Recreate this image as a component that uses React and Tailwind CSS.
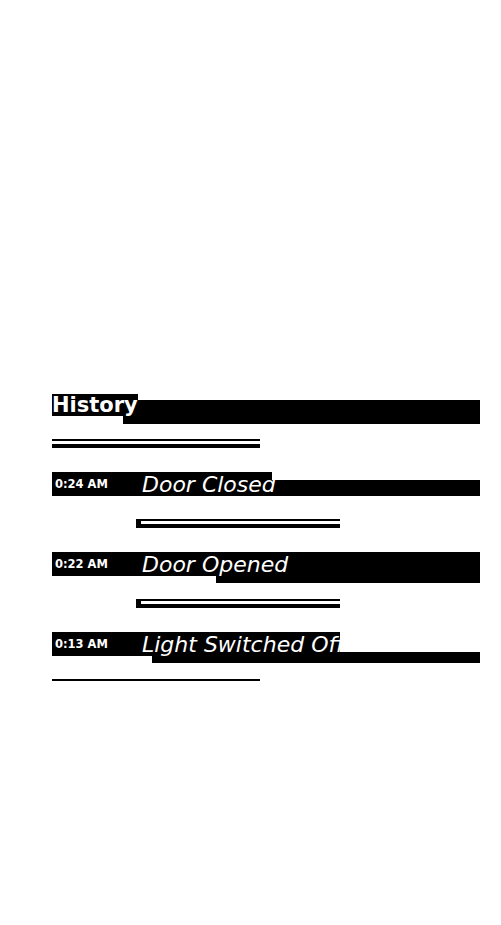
import React from 'react';

const events = [
  { time: '0:24 AM', title: 'Door Closed', kind: 'short' },
  { time: '0:22 AM', title: 'Door Opened', kind: 'full' },
  { time: '0:13 AM', title: 'Light Switched Off', kind: 'clip' },
];

function TimeCell({ time }) {
  return (
    <div className="w-[84px] h-[24px] shrink-0 bg-black pl-[3px] text-white font-['DejaVu_Sans',sans-serif] font-bold text-[11.5px] leading-[24px] whitespace-nowrap">
      {time}
    </div>
  );
}

const titleText = "pl-[6px] text-white italic font-['DejaVu_Sans',sans-serif] text-[22px] leading-[26px] whitespace-nowrap";

function Row({ event }) {
  if (event.kind === 'short') {
    return (
      <div className="flex items-start h-[24px]">
        <TimeCell time={event.time} />
        <div className={`relative z-10 w-[136px] h-[24px] bg-black ${titleText}`}>{event.title}</div>
        <div className="mt-[8px] h-[16px] flex-1 bg-black" />
      </div>
    );
  }
  if (event.kind === 'full') {
    return (
      <div className="flex items-start h-[24px]">
        <TimeCell time={event.time} />
        <div className="flex-1 relative">
          <div className="h-[24px] bg-black" />
          <div className="ml-[80px] h-[7px] bg-black" />
          <div className={`absolute left-0 top-0 ${titleText}`}>{event.title}</div>
        </div>
      </div>
    );
  }
  return (
    <div className="flex items-start h-[24px]">
      <TimeCell time={event.time} />
      <div className="w-[204px] shrink-0 relative overflow-hidden h-[31px]">
        <div className="h-[24px] bg-black" />
        <div className="ml-[16px] h-[7px] bg-black" />
        <div className={`absolute left-0 top-0 ${titleText}`}>{event.title}</div>
      </div>
      <div className="mt-[20px] h-[11px] flex-1 bg-black" />
    </div>
  );
}

function Divider() {
  return (
    <div className="ml-[84px] w-[204px] border-l-[5px] border-black">
      <div className="h-[2px] bg-black" />
      <div className="h-[3px]" />
      <div className="h-[4px] bg-black" />
    </div>
  );
}

export default function App() {
  return (
    <div className="min-h-[925px] w-full bg-white pt-[394px] pl-[52px] pr-[21px]">
      {/* Header */}
      <div className="flex items-start">
        <h2 className="relative z-10 h-[22px] bg-black text-white font-['DejaVu_Sans',sans-serif] font-bold text-[21px] leading-[22px] whitespace-nowrap">
          History
        </h2>
        <div className="-ml-[15px] mt-[6px] h-[24px] flex-1 bg-black" />
      </div>

      <div className="mt-[15px] w-[208px]">
        <div className="h-[2px] bg-black" />
        <div className="h-[3px]" />
        <div className="h-[4px] bg-black" />
      </div>

      {/* Events */}
      <div className="mt-[24px]">
        {events.map((event, i) => (
          <div key={i}>
            <Row event={event} />
            {i < events.length - 1 ? (
              <div className="mt-[23px] mb-[24px]">
                <Divider />
              </div>
            ) : null}
          </div>
        ))}
      </div>

      <div className="mt-[23px] w-[208px] h-[2px] bg-black" />
    </div>
  );
}
